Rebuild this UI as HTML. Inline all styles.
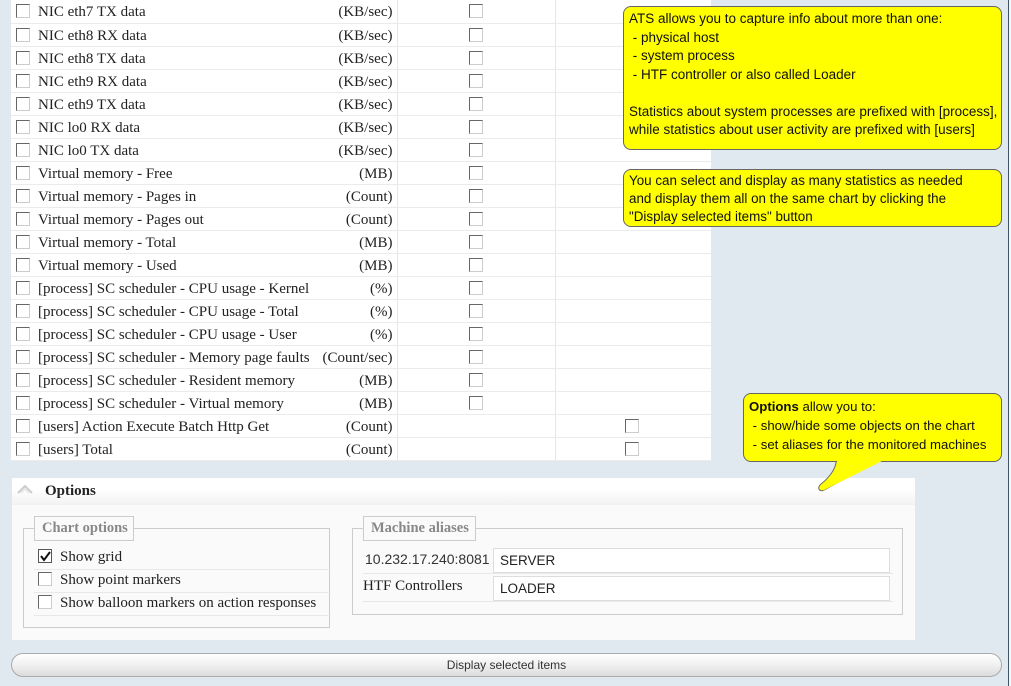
<!DOCTYPE html>
<html><head><meta charset="utf-8"><style>
*{box-sizing:border-box}
body{margin:0;width:1011px;height:686px;background:#dfe9ef;position:relative;overflow:hidden;font-family:"Liberation Serif",serif;color:#222}
.vline{position:absolute;left:1008px;top:0;width:1px;height:686px;background:#3d5566}
.vline2{position:absolute;left:1009px;top:0;width:2px;height:686px;background:#f4f6f8}
table{position:absolute;left:11px;top:0;width:700px;border-collapse:collapse;background:#fff}
td{height:23px;padding:0;border-bottom:1px solid #ebebeb;font-size:15px;vertical-align:middle}
td.l{width:386px;border-right:1px solid #e6e6e6;position:relative}
td.c2{width:158px;border-right:1px solid #e6e6e6;position:relative}
td.c3{position:relative}
.cb{display:inline-block;width:14px;height:14px;border:1px solid #666;border-right-color:#ccc;border-bottom-color:#ccc;background:#fff}
td.l .cb{position:absolute;left:5px;top:4px}
td.l .t{position:absolute;left:27px;top:4px}
td.l .u{position:absolute;right:4px;top:4px}
td.c2 .cb{position:absolute;left:71px;top:4px}
td.c3 .cb{position:absolute;left:69px;top:4px}
.note{position:absolute;background:#ffff00;border:1px solid #666;border-radius:8px;font-family:"Liberation Sans",sans-serif;font-size:13.4px;line-height:18.5px;color:#111;padding:3px 5px;white-space:nowrap}
.opt{position:absolute;left:12px;top:478px;width:903px;height:162px;background:#fafafa}
.opthd{height:27px;background:linear-gradient(#fff 0,#fff 40%,#f2f2f2 100%);position:relative}
.opthd b{position:absolute;left:33px;top:5px;font-size:15px}
fieldset{position:absolute;border:1px solid #ccc;margin:0;padding:0}
.lg{position:absolute;background:#fafafa;border:1px solid #ccc;color:#888;font-weight:bold;font-size:14.5px;padding:3px 7px;white-space:nowrap}
.row{position:absolute;font-size:15px;border-bottom:1px solid #e8e8e8;white-space:nowrap}
.inp{position:absolute;background:#fff;border:1px solid #ddd;font-family:"Liberation Sans",sans-serif;font-size:13.5px;padding:4px 6px;height:25px}
.btn{position:absolute;left:11px;top:653px;width:991px;height:24px;border:1px solid #aaa;border-radius:12px;background:linear-gradient(#fff,#f0f0f0 50%,#dcdcdc);font-family:"Liberation Sans",sans-serif;font-size:12px;color:#333;text-align:center;line-height:22px}
</style></head><body>
<div class="vline"></div><div class="vline2"></div>
<table>
<tr><td class="l"><span class="cb"></span><span class="t">NIC eth7 TX data</span><span class="u">(KB/sec)</span></td><td class="c2"><span class="cb"></span></td><td class="c3"></td></tr>
<tr><td class="l"><span class="cb"></span><span class="t">NIC eth8 RX data</span><span class="u">(KB/sec)</span></td><td class="c2"><span class="cb"></span></td><td class="c3"></td></tr>
<tr><td class="l"><span class="cb"></span><span class="t">NIC eth8 TX data</span><span class="u">(KB/sec)</span></td><td class="c2"><span class="cb"></span></td><td class="c3"></td></tr>
<tr><td class="l"><span class="cb"></span><span class="t">NIC eth9 RX data</span><span class="u">(KB/sec)</span></td><td class="c2"><span class="cb"></span></td><td class="c3"></td></tr>
<tr><td class="l"><span class="cb"></span><span class="t">NIC eth9 TX data</span><span class="u">(KB/sec)</span></td><td class="c2"><span class="cb"></span></td><td class="c3"></td></tr>
<tr><td class="l"><span class="cb"></span><span class="t">NIC lo0 RX data</span><span class="u">(KB/sec)</span></td><td class="c2"><span class="cb"></span></td><td class="c3"></td></tr>
<tr><td class="l"><span class="cb"></span><span class="t">NIC lo0 TX data</span><span class="u">(KB/sec)</span></td><td class="c2"><span class="cb"></span></td><td class="c3"></td></tr>
<tr><td class="l"><span class="cb"></span><span class="t">Virtual memory - Free</span><span class="u">(MB)</span></td><td class="c2"><span class="cb"></span></td><td class="c3"></td></tr>
<tr><td class="l"><span class="cb"></span><span class="t">Virtual memory - Pages in</span><span class="u">(Count)</span></td><td class="c2"><span class="cb"></span></td><td class="c3"></td></tr>
<tr><td class="l"><span class="cb"></span><span class="t">Virtual memory - Pages out</span><span class="u">(Count)</span></td><td class="c2"><span class="cb"></span></td><td class="c3"></td></tr>
<tr><td class="l"><span class="cb"></span><span class="t">Virtual memory - Total</span><span class="u">(MB)</span></td><td class="c2"><span class="cb"></span></td><td class="c3"></td></tr>
<tr><td class="l"><span class="cb"></span><span class="t">Virtual memory - Used</span><span class="u">(MB)</span></td><td class="c2"><span class="cb"></span></td><td class="c3"></td></tr>
<tr><td class="l"><span class="cb"></span><span class="t">[process] SC scheduler - CPU usage - Kernel</span><span class="u">(%)</span></td><td class="c2"><span class="cb"></span></td><td class="c3"></td></tr>
<tr><td class="l"><span class="cb"></span><span class="t">[process] SC scheduler - CPU usage - Total</span><span class="u">(%)</span></td><td class="c2"><span class="cb"></span></td><td class="c3"></td></tr>
<tr><td class="l"><span class="cb"></span><span class="t">[process] SC scheduler - CPU usage - User</span><span class="u">(%)</span></td><td class="c2"><span class="cb"></span></td><td class="c3"></td></tr>
<tr><td class="l"><span class="cb"></span><span class="t">[process] SC scheduler - Memory page faults</span><span class="u">(Count/sec)</span></td><td class="c2"><span class="cb"></span></td><td class="c3"></td></tr>
<tr><td class="l"><span class="cb"></span><span class="t">[process] SC scheduler - Resident memory</span><span class="u">(MB)</span></td><td class="c2"><span class="cb"></span></td><td class="c3"></td></tr>
<tr><td class="l"><span class="cb"></span><span class="t">[process] SC scheduler - Virtual memory</span><span class="u">(MB)</span></td><td class="c2"><span class="cb"></span></td><td class="c3"></td></tr>
<tr><td class="l"><span class="cb"></span><span class="t">[users] Action Execute Batch Http Get</span><span class="u">(Count)</span></td><td class="c2"></td><td class="c3"><span class="cb"></span></td></tr>
<tr><td class="l"><span class="cb"></span><span class="t">[users] Total</span><span class="u">(Count)</span></td><td class="c2"></td><td class="c3"><span class="cb"></span></td></tr>
</table>

<div class="opt">
 <div class="opthd">
  <svg style="position:absolute;left:5px;top:6px" width="16" height="10"><path d="M1 9 L8 2 L15 9" fill="none" stroke="#ccc" stroke-width="2"/><path d="M4 9 L8 5 L12 9" fill="none" stroke="#e4e4e4" stroke-width="1.5"/></svg>
  <b>Options</b>
 </div>
 <fieldset style="left:11px;top:50px;width:307px;height:100px"></fieldset>
 <div class="lg" style="left:22px;top:38px;width:100px;height:25px">Chart options</div>
 <div class="row" style="left:22px;top:69px;width:297px;height:23px"><span class="cb" style="position:absolute;left:4px;top:2px;border-color:#555"></span><svg style="position:absolute;left:5px;top:3px" width="13" height="13"><path d="M2 6 L5 10 L11 2" fill="none" stroke="#111" stroke-width="2"/></svg><span style="position:absolute;left:26px;top:2px">Show grid</span></div>
 <div class="row" style="left:22px;top:92px;width:297px;height:23px"><span class="cb" style="position:absolute;left:4px;top:2px"></span><span style="position:absolute;left:26px;top:2px">Show point markers</span></div>
 <div class="row" style="left:22px;top:115px;width:297px;height:23px"><span class="cb" style="position:absolute;left:4px;top:2px"></span><span style="position:absolute;left:26px;top:2px">Show balloon markers on action responses</span></div>
 <fieldset style="left:340px;top:50px;width:551px;height:87px"></fieldset>
 <div class="lg" style="left:351px;top:38px;width:113px;height:25px">Machine aliases</div>
 <div class="row" style="left:351px;top:69px;width:530px;height:27px"><span style="position:absolute;left:2px;top:4px;font-family:'Liberation Sans',sans-serif;font-size:14px;color:#333">10.232.17.240:8081</span></div>
 <div class="row" style="left:351px;top:97px;width:530px;height:27px"><span style="position:absolute;left:0;top:3px">HTF Controllers</span></div>
 <div class="inp" style="left:481px;top:70px;width:397px">SERVER</div>
 <div class="inp" style="left:481px;top:98px;width:397px">LOADER</div>
</div>

<div class="btn">Display selected items</div>

<div class="note" style="left:623px;top:6px;width:379px;height:144px;font-size:13.5px">ATS allows you to capture info about more than one:<br>&nbsp;- physical host<br>&nbsp;- system process<br>&nbsp;- HTF controller or also called Loader<br><br>Statistics about system processes are prefixed with [process],<br>while statistics about user activity are prefixed with [users]</div>
<div class="note" style="left:623px;top:169px;width:379px;height:58px;line-height:18px;padding-top:2px">You can select and display as many statistics as needed<br>and display them all on the same chart by clicking the<br>"Display selected items" button</div>
<svg style="position:absolute;left:810px;top:455px" width="90" height="40"><path d="M26 1 C28 12 20 22 10 30 C7 34 10 37 14 35 L76 1 Z" fill="#ffff00" stroke="#666" stroke-width="1"/></svg>
<div class="note" style="left:743px;top:393px;width:259px;height:69px;line-height:19px;font-size:13.2px"><b>Options</b> allow you to:<br>&nbsp;- show/hide some objects on the chart<br>&nbsp;- set aliases for the monitored machines</div>
<svg style="position:absolute;left:810px;top:455px" width="90" height="40"><path d="M27 6 C28 14 20 22 11 30 C8 33 10 36 14 35 L72 6 Z" fill="#ffff00"/></svg>
</body></html>
